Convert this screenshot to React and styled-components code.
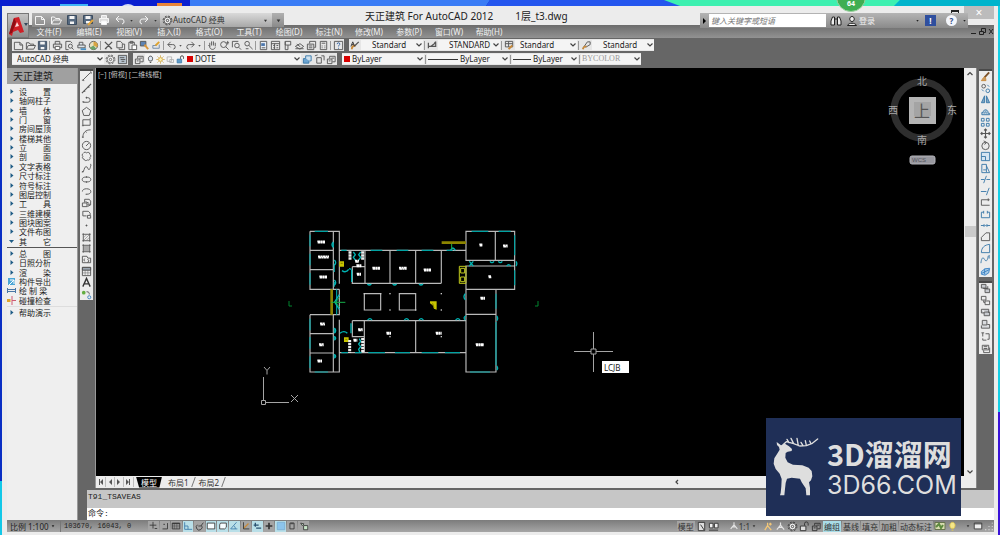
import React, { useState } from "react";
import styled, { createGlobalStyle } from "styled-components";

const BLUE = "#3a78a8";
const ORANGE = "#c98a3a";

// every glyph is drawn on a 12x12 grid
const glyphs = {
    file: <path d="M1.500 2.500h6l3 3v5h-9zM7.500 2.500v3h3" />,
    folder: <path d="M1.500 10V3h3l1 1.500h4V6M1.500 10l2-4h8l-2 4z" />,
    save: (
        <>
            <path d="M1.500 1.500h9v9h-9z" fill="#56697f" stroke="#3c4d60" />
            <path d="M3.500 2h5v3h-5zM4 7.500h4V10H4z" fill="#f4f4f4" stroke="none" />
        </>
    ),
    saveas: (
        <>
            <path d="M1.500 1.500h9v8h-9z" fill="#56697f" stroke="#3c4d60" />
            <path d="M3.500 2h5v3h-5zM4 7h4v2.500H4z" fill="#f4f4f4" stroke="none" />
            <path d="M6 11l5-5" stroke="#e4a63a" strokeWidth="2" />
        </>
    ),
    print: (
        <>
            <path d="M3.500 4.500v-3h5v3M1.500 4.500h9v4h-9z" fill="#dcdcdc" />
            <path d="M3.500 7h5v3.500h-5z" fill="#fff" />
        </>
    ),
    preview: <path d="M2 1.500h5l2 2M2 1.500v9h3M7 4.500a2.200 2.200 0 100 4.400 2.200 2.200 0 000-4.400M8.500 8.500l2 2" />,
    publish: (
        <>
            <path d="M2 5.500h8v3H2zM3.500 5.500v-3h4v3" fill="#dde4ea" />
            <path d="M5 10h6" stroke="#4a90c4" strokeWidth="2" />
        </>
    ),
    globe: (
        <>
            <circle cx="6" cy="6" r="4.500" fill="#e9e2c0" />
            <path d="M6 1.500v4.500l4 2A4.500 4.500 0 006 1.500" fill="#d9a441" stroke="none" />
            <path d="M6 6L2 8.500A4.500 4.500 0 009 9.500z" fill="#6ca36a" stroke="none" />
        </>
    ),
    cut: <path d="M2 2l7 7M10 2L3 9M2 9.500h2M8 9.500h2" strokeWidth="1.400" />,
    copy: <path d="M2 1.500h4l2 2v5H2zM4.500 9v1.500h6v-6H8.500" />,
    paste: (
        <>
            <path d="M2 2.500h6v8H2zM3.500 1.500h3v2h-3z" />
            <path d="M5.500 5.500h5v5h-5z" fill="#fff" />
        </>
    ),
    match: (
        <>
            <path d="M1.500 1.500h6v5h-6z" fill="#5c83b5" />
            <path d="M6 5l4 5" stroke="#d9953a" strokeWidth="2" />
        </>
    ),
    blockEdit: (
        <>
            <path d="M2 9h7V5M2 9V6h4" stroke="#6f8aa6" />
            <path d="M5 6l4-4" stroke="#dfa32d" strokeWidth="2" />
        </>
    ),
    undo: <path d="M5 2L2 5l3 3M2 5h5a2.500 2.500 0 011 5" />,
    redo: <path d="M7 2l3 3-3 3M10 5H5a2.500 2.500 0 00-1 5" />,
    down: <path d="M4 5h4l-2 3z" fill="currentColor" stroke="none" />,
    pan: <path d="M3 7L1.500 5.500M3 8V3M5 6V1.500M7 6V1.500M9 7V3M3 8c1 3 5 3 6 0" />,
    zoomRt: (
        <>
            <circle cx="5" cy="5" r="3.200" />
            <path d="M7.500 7.500l3 3M9.500 1v4M8 3h3" />
        </>
    ),
    zoomWin: (
        <>
            <path d="M1.500 8V1.500H8" />
            <circle cx="6.500" cy="6" r="2.500" />
            <path d="M8.500 8l2.500 2.500" />
        </>
    ),
    zoomPrev: (
        <>
            <circle cx="4.500" cy="4" r="2.500" />
            <path d="M6.500 6l4 4M3 9.500h3" />
        </>
    ),
    props: (
        <>
            <path d="M2.500 1.500h7v9h-7z" fill="#e8eef5" />
            <path d="M3.500 3.500h4v3h-4z" fill="#4b76ad" stroke="none" />
            <path d="M4 8.500h4" />
        </>
    ),
    center: <path d="M1.500 1.500h9v9h-9zM1.500 4h9M3.500 6h2M7 6h2M3.500 8.500h2M7 8.500h2M5 4v6" />,
    tool: <path d="M3.500 1.500h6v4h-6zM3.500 1.500v9h3v-5" />,
    sheet: <path d="M1.500 7l5-3 4 3-4 3zM1.500 9.500h9M3 4.500l4 3" />,
    markup: <path d="M1.500 4.500h7v6h-7zM4 4V1.500h6.500V8H9M3 6.500h4M3 8.500h4" />,
    calc: <path d="M2.500 1.500h7v9h-7zM4 3.500h4M4 6.500h1M7 6.500h1M4 8.500h1M7 8.500h1" />,
    help: (
        <>
            <path d="M1.500 1.500h9v9h-9z" />
            <path d="M4.500 4.500c0-2 3-2 3 0 0 1-1.500 1-1.500 2.500M6 8.500v1" stroke="#2b5ca0" />
        </>
    ),
    gear: (
        <>
            <circle cx="6" cy="6" r="4.800" strokeDasharray="2 1.800" strokeWidth="1" />
            <circle cx="6" cy="6" r="3.700" fill="#f2f2f2" strokeWidth=".8" />
            <circle cx="6" cy="6" r="1.300" strokeWidth=".9" />
        </>
    ),
    workspace: (
        <>
            <path d="M1.500 1.500h9v9h-9z" fill="#b8c4cf" />
            <path d="M3 4h5M4 6h5M5 8h3" />
        </>
    ),
    brush: (
        <>
            <path d="M2 10c0-3 2-4 4-4" stroke={ORANGE} strokeWidth="2" />
            <path d="M5 6.500L9.500 2" strokeWidth="1.400" />
            <path d="M1 7l2-5 2 5M2 5h2" stroke="#333" />
        </>
    ),
    dimBrush: <path d="M1.500 3v6M1.500 7h8V3L4 7M8 3l2-1" strokeWidth="1.300" />,
    tableBrush: (
        <>
            <path d="M1.500 1.500h8v6h-8zM1.500 4h8M5 1.500v6" />
            <path d="M5 10l4-4" stroke={ORANGE} strokeWidth="2" />
        </>
    ),
    leaderBrush: (
        <>
            <path d="M2 9l5-7h3v3L5 8" />
            <path d="M2 10c1-3 2-3 4-3" stroke={ORANGE} strokeWidth="2" />
        </>
    ),
    layers: <path d="M1.500 5.500h5v5h-5zM4 5V2.500h6v6H7M3 7.500h2M6 4.500h3" />,
    layerBlue: (
        <>
            <path d="M1.500 5h6v5h-6z" fill="#6ba4d1" stroke={BLUE} />
            <path d="M4 4.500V2h6v5.500H8" fill="#cfe2f0" stroke={BLUE} />
        </>
    ),
    layerPrev: <path d="M3 4h5v6H3zM1 2l3-1M8 2h3v5" />,
    bulb: <path d="M4.500 8C2 5 3.500 1.500 6 1.500S10 5 7.500 8zM5 10h2" fill="#dfe9f5" />,
    sun: (
        <>
            <circle cx="6" cy="6" r="2.600" stroke="#c99a2c" fill="#fff2b0" />
            <path d="M6 .5v2M6 9.500v2M.5 6h2M9.500 6h2M2 2l1.500 1.500M8.500 8.500L10 10M10 2L8.500 3.500M2 10l1.500-1.500" stroke="#c99a2c" />
        </>
    ),
    vp: <path d="M1.500 2.500h6v6h-6zM5 6h5v4H5z" stroke="#aaa" />,
    unlock: (
        <>
            <path d="M1.500 5.500h6v5h-6z" fill="#5f9cc9" stroke={BLUE} />
            <path d="M6 5V3a2 2 0 014 0v2" />
        </>
    ),
    lockOpen: (
        <>
            <path d="M1.500 5.500h6v5h-6z" fill="#ddd" />
            <path d="M6 5V3a2 2 0 014 0v2" />
        </>
    ),
    line: <path d="M2 10l8-8M1 10h2v1M10 1h1v2" />,
    xline: <path d="M1 11L11 1M3 8l1.500 1.500M7.500 3.500L9 5" strokeWidth="1.200" />,
    pline: <path d="M2 9h5.500a2.500 2.500 0 000-5H5M1.500 8.500h2M6 3v2" />,
    polygon: <path d="M6 1.500L10.700 5 9 10.300H3L1.300 5z" />,
    rect: <path d="M2 3h8v6H2zM1 9.500h2M9.500 2h1.500" />,
    arc: <path d="M2 10.500C2 5 5 2 10.500 2M1 10h2M5 4l1 1" />,
    circle: (
        <>
            <circle cx="6" cy="6" r="4.500" />
            <path d="M6 6l2.500-2.500M5.500 6h1" />
        </>
    ),
    cloud: <path d="M2.500 2.500C3.500 1 5 1 6 2c1.500-1 4-.5 3.500 1.500 1.500 1 1.500 2.500.3 3.500.7 2-1 3.500-2.800 2.800C5.500 11 3.500 10.500 3.500 9 1.500 8.500 1 7 2 6 1 5 1.200 3.300 2.500 2.500z" />,
    spline: <path d="M1 10c3 0 2-6 4.500-6S7 8 9 7c1.500-.7 1-3 2-5M1 9.500h2M10 1.500h1" />,
    ellipse: (
        <>
            <ellipse cx="6" cy="6" rx="4.700" ry="2.700" />
            <path d="M5.500 3.300h1M5.500 8.700h1" strokeWidth="1.600" />
        </>
    ),
    ellArc: <path d="M1.500 6c0-2 2-3 4.500-3s4.700 1 4.700 3S9 9 6 9M5 9h1.500" />,
    insert: <path d="M4 2.500h5l1.500 2v4H7M1.500 6.500h5v4h-5zM5 5l4 2M4 2.500V6M7 10.500l3.500-2" />,
    block: <path d="M2 2.500h6l2 2v2M2 2.500v5h4M7 7h3.500v3H7z" />,
    point: <path d="M5.500 5.500h1v1h-1z" fill="currentColor" />,
    hatch: (
        <>
            <path d="M3 6l3-3M3 9l6-6M6 9l3-3" strokeWidth=".5" />
            <path d="M1.500 2.500h9M1.500 9.500h9M2.500 1.500v9M9.500 1.500v9" />
        </>
    ),
    gradient: (
        <>
            <path d="M3 3h6v6H3z" fill="#aaa" stroke="none" />
            <path d="M1.500 2.500h9M1.500 9.500h9M2.500 1.500v9M9.500 1.500v9" />
        </>
    ),
    region: <path d="M1.500 2.500h5l1 2h3v5h-9zM7 6a1.500 1.500 0 110 3M4 5a2 2 0 000 3" />,
    table: (
        <>
            <path d="M1.500 4.500h9M1.500 7.500h9M4.500 4.500v6M7.500 4.500v6" strokeWidth=".5" />
            <path d="M1.500 1.500h9v3h-9z" fill="#9aa5b0" />
            <path d="M1.500 1.500h9v9h-9z" />
        </>
    ),
    mtext: <path d="M2 10.500L6 1.500l4 9M3.500 7.500h5" stroke="#333" strokeWidth="1.500" />,
    addSel: (
        <>
            <circle cx="3" cy="4" r="2" fill="#62ad3f" stroke="none" />
            <path d="M6 3c3 0 3 1 3 3" />
            <circle cx="9" cy="9" r="1.700" stroke="#3d83c4" />
        </>
    ),
    erase: (
        <>
            <path d="M5 7l5-5.500" stroke="#7a5028" strokeWidth="2" />
            <path d="M1.500 10.500h5L6 7H4z" fill="#c99a62" stroke={ORANGE} />
        </>
    ),
    copyObj: (
        <>
            <circle cx="4" cy="3.500" r="2" />
            <circle cx="8.500" cy="8.500" r="2" stroke={BLUE} />
            <path d="M2 7l2 2M8 2l2 2" stroke={BLUE} />
        </>
    ),
    mirror: <path d="M5 2L1.500 9.500H5zM7 2l3.500 7.500H7z" fill="#7fa6c4" stroke={BLUE} />,
    offset: <path d="M2 9.500h8.500V8H9C9 3 3.500 3 3.500 7H2zM5 8c0-2 2-2 2 0" fill="#b4cbdc" stroke={BLUE} />,
    array: <path d="M1.500 1.500h3v3h-3zM7 1.500h3v3H7zM1.500 7h3v3h-3zM7 7h3v3H7z" stroke={BLUE} />,
    move: <path d="M6 1v10M1 6h10M4.500 2.500L6 1l1.500 1.500M4.500 9.500L6 11l1.500-1.500M2.500 4.500L1 6l1.500 1.500M9.500 4.500L11 6 9.500 7.500" strokeWidth="1.200" />,
    rotate: (
        <>
            <circle cx="6" cy="6.500" r="4" />
            <path d="M4 1l3 1.500L5 5" />
        </>
    ),
    scale: <path d="M1.500 1.500h9v9h-9zM1.500 6H6v4.500" fill="#d5e5f2" stroke={BLUE} />,
    stretch: <path d="M2 1.500h5v9H2zM7 3l3.500 7.500H7M3.500 7.500h3" stroke={BLUE} />,
    trim: <path d="M1 6h4M7 6h4M4 10l3-8" stroke={BLUE} />,
    extend: <path d="M1 6h6M7 10l3-8" stroke={BLUE} />,
    breakPt: <path d="M10.500 3h-9v6h9M9 1.500v3" />,
    breakObj: <path d="M4 3.500H1.500v6h9v-6H8M4 2v3M8 2v3" stroke={BLUE} />,
    join: <path d="M1 6h4M7 6h4M4 4.500L5.500 6 4 7.500M8 4.500L6.500 6 8 7.500" stroke={BLUE} />,
    chamfer: <path d="M1.500 10.500V7l5-5h4v8.500z" />,
    fillet: <path d="M1.500 10.500C1.500 5 5 2 10.500 1.500v9z" stroke={BLUE} />,
    blend: <path d="M1 10c1-8 3-6 4-4s3 3 4-4M10 1v4" stroke={BLUE} />,
    explode: <path d="M1.500 6l4-3 5-.5-1 5-4 2.500-4-1zM5 3v6M2 8l8-4" fill="#a8cbe6" stroke="#3d83c4" />,
    front: <path d="M1.500 1.500h5v4h-5zM3.500 6h5V3.500M5.500 6v4.500h5v-4H6" fill="#c6c9ce" />,
    back: <path d="M1.500 1.500h5v4h-5zM5.500 6.500h5v4h-5zM4 6v2h1.500" />,
    above: <path d="M1.500 2.500h8v4M1.500 2.500v4h3M4.500 5.500h6v4h-6z" fill="#c6c9ce" />,
    under: <path d="M2.500 1.500h5v5h-5zM1.500 7v3h9V6H8" fill="#d9dbde" />,
    textFront: <path d="M1.500 2h3M3 2v4M6 3h4v6H8M3 8v2h4" />,
    hatchBack: <path d="M2.500 2.500h7v5h-7zM4 8v2.500h6.500V5M4 4h4M4 6h4" />,
    snap: <path d="M6 1v8M2 5h8M8 9h3" />,
    ell: <path d="M3 9.500h6v-7M4 4h2" />,
    grid: (
        <>
            <path d="M1.500 5h9M1.500 7h9M4 2.500v7M7 2.500v7" strokeWidth=".5" />
            <path d="M1.500 2.500h9v7h-9zM1.500 3h9" />
        </>
    ),
    ortho: <path d="M2 1.500v8.500h9M2 6h4v4" stroke={BLUE} />,
    polar: <path d="M3 4.500a3.500 3.500 0 105 1M4 6h3l3-4" />,
    osnap: <path d="M1.500 2.500h9v7h-9z" fill="#f7fdff" />,
    osnap3d: <path d="M3 2.500h7v5l-2 2H2v-5z" fill="#f7fdff" />,
    angle: <path d="M9 1.500L2 9.500h8M6 6c1.500 1 1.500 2 1.500 3.500" stroke={BLUE} />,
    ducs: (
        <>
            <path d="M3 9l6-6" stroke={ORANGE} strokeWidth="1.500" />
            <path d="M3 1.500v8h7" />
        </>
    ),
    dyn: <path d="M4 2v5M2 5h6M5 8.500h6" stroke="#27506f" strokeWidth="1.500" />,
    plus: <path d="M6 2v8M2 6h8" strokeWidth="2" />,
    tpy: <path d="M1.500 1.500h9v9h-9z" fill="#8cc4ec" stroke="#7aaed2" />,
    qp: <path d="M3.500 2.500h5v7h-5zM5 2v2M7 2v2" />,
    sel: <path d="M2 2.500l4 1-2 2zM5.500 5.500h5v5h-5z" fill="#c9e6c9" />,
    page: <path d="M2.500 1.500h7v9h-7zM5 4l4 6" fill="#ddd" />,
    panes: <path d="M1.500 2.500h4v5h-4zM7 2.500h4V7.500H7zM1 10h10" fill="#eee" />,
    man: <path d="M6 1.500v3l-4 5M6 4.500l4 5M4 7h4" stroke="#e4e4e4" strokeWidth="1.300" />,
    manGold: <path d="M5 2v3l-3 5M5 5l4 5M8 2v3M6.500 3.500h3" stroke="#f3c777" strokeWidth="1.400" />,
    photo: (
        <>
            <path d="M1 2.500h10v7H1z" fill="#d8ddb0" stroke="#67754e" />
            <path d="M2 7l3-3 2 4 2-3" stroke="#5d8a3e" strokeWidth="2" />
        </>
    ),
    bulbGold: <path d="M4.500 8C2 5 3.500 1.500 6 1.500S10 5 7.500 8zM5 10h2" fill="#f5e68a" stroke="#e0c84e" />,
    screen: <path d="M1.500 2.500h9v7h-9zM1.500 3.500h9" fill="#eee" />,
    grip: <path d="M10 2v1M10 6v1M10 10v1M6 6v1M6 10v1M2 10v1" stroke="#ddd" strokeWidth="1.500" />,
    binoc: <path d="M1 10V6l1.500-4h2v8zM11 10V6L9.500 2h-2v8zM5 4h2" fill="#eee" />,
    user: <path d="M6 1.500c-3 0-3 5 0 5s3-5 0-5M1.500 10.500c1-3 8-3 9 0z" fill="#eee" />,
};

function Icon({ name, size = 11 }) {
    return (
        <svg
            width={size}
            height={size}
            viewBox="0 0 12 12"
            fill="none"
            stroke="currentColor"
            strokeWidth="1"
            aria-hidden="true"
        >
            {glyphs[name]}
        </svg>
    );
}

const Chevron = ({ up, left }) => (
    <svg width="8" height="8" viewBox="0 0 8 8" fill="none" stroke="#444" strokeWidth="1.200">
        <path d={left ? "M5 2L3 4l2 2" : up ? "M1.500 5L4 2.500 6.500 5" : "M1.500 2.500L4 5l2.500-2.500"} />
    </svg>
);

function Tools({ items }) {
    return items.map((name, i) =>
        name === "|" ? (
            <Divider key={i} />
        ) : (
            <ToolButton key={i} $narrow={name === "down"} type="button" aria-label={name}>
                <Icon name={name} size={name === "down" ? 7 : 11} />
            </ToolButton>
        )
    );
}

function Combo({ label, value, width, indent = 0, lead, disabled }) {
    return (
        <ComboBox $width={width} $indent={indent} $disabled={disabled}>
            {lead}
            <Select aria-label={label} disabled={disabled} defaultValue={value}>
                <option>{value}</option>
            </Select>
            <Chevron />
        </ComboBox>
    );
}

const quickIcons = ["file", "folder", "save", "saveas", "print", "undo"];

const menus = ["文件(F)", "编辑(E)", "视图(V)", "插入(I)", "格式(O)", "工具(T)", "绘图(D)", "标注(N)", "修改(M)", "参数(P)", "窗口(W)", "帮助(H)"];

const standardTools = [
    "file", "folder", "save", "|", "print", "preview", "publish", "globe", "|",
    "cut", "copy", "paste", "match", "blockEdit", "|", "undo", "down", "redo", "down", "|",
    "pan", "zoomRt", "zoomWin", "zoomPrev", "|", "props", "center", "tool", "sheet", "markup", "calc", "|", "help",
];

const drawTools = [
    "line", "xline", "pline", "polygon", "rect", "arc", "circle", "cloud", "spline", "ellipse",
    "ellArc", "insert", "block", "point", "hatch", "gradient", "region", "table", "mtext", "addSel",
];

const modifyTools = [
    "erase", "copyObj", "mirror", "offset", "array", "move", "rotate", "scale", "stretch",
    "trim", "extend", "breakPt", "breakObj", "join", "chamfer", "fillet", "blend", "explode",
];

const orderTools = ["front", "back", "above", "under", "textFront", "hatchBack"];

const paletteMain = [
    "设　　置", "轴网柱子", "墙　　体", "门　　窗", "房间屋顶", "楼梯其他", "立　　面", "剖　　面", "文字表格",
    "尺寸标注", "符号标注", "图层控制", "工　　具", "三维建模", "图块图案", "文件布图", "其　　它",
];

const paletteMore = [
    { text: "总　　图" },
    { text: "日照分析" },
    { text: "渲　　染" },
    { text: "构件导出", icon: "export" },
    { text: "绘 制 梁", icon: "beam" },
    { text: "碰撞检查", icon: "clash" },
];

const toggles = [
    ["snap", 0], ["ell", 0], ["grid", 0], ["ortho", 1], ["polar", 0], ["osnap", 1], ["osnap3d", 1],
    ["angle", 1], ["ducs", 0], ["dyn", 1], ["plus", 0], ["tpy", 1], ["qp", 0], ["sel", 0],
];

function Marker({ kind, open }) {
    return (
        <svg width="9" height="9" viewBox="0 0 9 9" aria-hidden="true">
            {!kind && <path d={open ? "M2 3h5L4.500 6z" : "M3.500 2l3 2.500-3 2.500z"} fill="#1f5c86" />}
            {kind === "export" && (
                <>
                    <path d="M1 1h7v7H1z" fill="#4aa6d6" />
                    <path d="M3 3h4v4M7 3L2 8" stroke="#fff" fill="none" />
                </>
            )}
            {kind === "beam" && <path d="M.5 2v5M8.500 2v5M1 3.500h7M1 5.500h7" stroke="#4a78a5" fill="none" />}
            {kind === "clash" && (
                <>
                    <path d="M0 4.500h3.500" stroke="#e0a52a" strokeWidth="3" />
                    <path d="M5 0v9M5 4.500h4" stroke="#d05a72" strokeWidth="1" />
                </>
            )}
        </svg>
    );
}

// the plan group is drawn three units to the pixel
const walls = [
    "M30 28H118V185M30 28V202H118M100 28V202M30 85H100M30 143H100",
    "M30 278H118V220M118 202V220M118 262V278M30 278V450H118V293M100 278V450M30 335H100M30 393H100",
    "M118 85H498M195 85V184M270 85V184M347 85V184M424 85V184M155 184H424M157 134H195M157 134V184",
    "M193 215H242V264H193zM298 215H347V264H298z",
    "M157 296H498M193 296V392M347 296V392M118 392H498M157 296V344H193",
    "M498 115V28H644V115zM586 28V115M498 132H644V202H498zM644 115V132",
    "M498 184V450H588V202M498 277H588",
];

const windows = [
    "M30 38v35M30 95v35M30 153v35M30 290v35M30 345v35M30 403v35M44 28h40M44 450h40",
    "M124 85h16M212 85h35M290 85h35M365 85h35M440 85h18M205 392h50M285 392h45M365 392h50M435 392h45M124 392h20M165 392h20",
    "M515 28h50M596 28h36M644 40v60M644 145v45M588 215v45M588 300v130M510 450h60",
    "M100 62v14M103 125v25M103 180v14M103 318v14M103 343v10M103 397v10M110 202v76",
];

const swings = [
    "M202 186q6 6 12 0M278 186q6 6 12 0M357 186q6 6 12 0M203 294q7-8 13 0M313 294q7-8 13 0M357 294q7-8 13 0M467 294q7-8 13 0",
    "M100 60q-8 8 0 16M103 130q8-8 0-16M103 190q8-8 0-16M103 318q8 8 0 16M103 343q8 6 0 12M103 397q8 6 0 12",
    "M118 218l-14 22 14 22M508 118l12 14M508 132l12-14M570 118q6 8 12 0M595 118q6 8 12 0M620 132q6-8 12 0M648 118q5 7 0 14",
    "M496 215q-8 10 0 18M498 282q-10 4-2 12M590 282q6 8 0 14M590 432q6 8 0 12M452 85q6-14 14 0M120 334q12-10 22 0M126 146q12 8 20-4M147 140l8 2M155 144v36M153 304v30",
    "M160 90l6 8-6 8 6 8M182 90l-6 8 6 8-6 8M178 350l4 8-6 8 6 8-6 8 4 10",
];

const labels = [
    [52, 58, 23], [54, 103, 33], [58, 163, 23], [60, 304, 15], [57, 366, 14], [52, 415, 14],
    [217, 137, 23], [297, 137, 23], [371, 142, 22], [538, 67, 10], [609, 70, 14], [565, 162, 9],
    [541, 227, 14], [259, 332, 14], [407, 332, 18], [527, 366, 25], [170, 155, 13], [174, 321, 14],
    [160, 353, 12], [165, 116, 12], [169, 129, 16],
];

function FloorPlan() {
    return (
        <g transform="translate(300 222) scale(0.3333)" fill="none">
            <path d={walls.join("")} stroke="#b9b9b9" strokeWidth="3.500" />
            <path d={windows.join("")} stroke="#00a3a3" strokeWidth="3.500" />
            <path d={swings.join("")} stroke="#00b4b4" strokeWidth="4" />
            <path d="M91 202h8v76h-8zM425 58h73v8h-73z" fill="#8c8400" />
            <path d="M478 133h20v51h-20zM482 139h12v14h-12zM482 165h12v14h-12z" stroke="#c3cc1c" strokeWidth="3" />
            <path d="M390 238h20v25l-8-3-4-10-8-6zM118 118h14v16h-14zM132 346h14v14h-14z" fill="#c9c500" />
            <path d="M398 244l4 14M122 124h6M136 352h6" stroke="#5c5b00" strokeWidth="2" />
            <path d="M94 241h42M106 241l12-14M106 241l12 14M455 66v15" stroke="#17b04a" strokeWidth="3" />
            <path d="M150 88v26M188 88v26M149 354v38M188 348v44" stroke="#eee" strokeWidth="9" strokeDasharray="7 2" />
            {labels.map(([x, y, w]) => (
                <path key={`${x}-${y}`} d={`M${x} ${y}h${w}M${x + 1} ${y + 4}h${w - 1}`} stroke="#fff" strokeWidth="5" strokeDasharray="8 1 5 1" />
            ))}
            {[[270, 215], [270, 264], [424, 215], [424, 264], [270, 344], [424, 344], [193, 215], [242, 215], [347, 264]].map(([x, y]) => (
                <rect key={`${x}-${y}`} x={x - 2} y={y - 2} width="4" height="4" fill="#ccc" />
            ))}
        </g>
    );
}

function Drawing() {
    return (
        <Scene viewBox="96 68 869 408" preserveAspectRatio="xMinYMin slice">
            <FloorPlan />
            <path d="M289 301v5h3M538 301v5h-3" fill="none" stroke="#00852f" />
            <path d="M263.500 377v23M266 402.500h23M261.500 400.500h4v4h-4zM264 367l3 3.500 3-3.500M267 370.500v4M291 395l7 7M298 395l-7 7" fill="none" stroke="#a5a5a5" />
            <path d="M593.500 332v17M593.500 354v18M574 351.500h17M596 351.500h17M591 349h5v5h-5z" fill="none" stroke="#a5a5a5" />
            <circle cx="922" cy="110" r="28" fill="none" stroke="#2e2e2e" strokeWidth="7" />
            <rect x="909" y="97" width="27" height="27" fill="#b4b4b4" />
            <rect x="914" y="102" width="17" height="14" fill="#a4a4a4" />
            <g fill="#a8a8a8" fontSize="10" fontFamily="'Noto Sans CJK SC', sans-serif" textAnchor="middle">
                <text x="922" y="85">北</text>
                <text x="893" y="114">西</text>
                <text x="952" y="114">东</text>
                <text x="922" y="144">南</text>
                <text x="922" y="117" fontSize="16" fill="#555">上</text>
            </g>
            <rect x="910" y="156" width="25" height="8" rx="2" fill="#98989f" stroke="#b4b4ba" />
            <text x="912" y="162" fontSize="6" fill="#54545c" fontFamily="'Liberation Sans', sans-serif">WCS</text>
        </Scene>
    );
}

function Deer() {
    return (
        <svg width="46" height="60" viewBox="36 78 138 180" fill="#dedede" aria-hidden="true">
            <path d="M47 93L60 103 72 98 84 106 93 114 92 120 80 122 74 126 73 140 80 154 96 161 124 163 143 170 152 180 154 196 150 208 144 214 147 230 147 253H136L134 232 122 214 117 203 92 200 78 203 74 216 72 234 70 253H57L59 246 61 226 62 204 56 188 44 174 38 158 40 142 50 126 56 116 54 108 48 102z" />
            <path d="M66 101L76 92 98 98 116 105 136 104 154 97 170 84M84 95l-6-10M98 98l-8-16M112 104l-4-22M126 104l-6-10M136 103l-3-14M150 98l-4-8" fill="none" stroke="#dedede" strokeWidth="4" strokeLinejoin="round" strokeLinecap="round" />
        </svg>
    );
}

export default function App() {
    const [command, setCommand] = useState("");
    const [keyword, setKeyword] = useState("");
    const [tab, setTab] = useState("模型");

    return (
        <Desktop>
            <GlobalStyle />
            <Wallpaper viewBox="0 0 1000 6" preserveAspectRatio="none">
                <path d="M0 0h190v6H0z" fill="#0a1fd0" />
                <path d="M190 0h300l-4 6H190z" fill="#3a7cf5" />
                <path d="M490 0h190v6H486z" fill="#2456ee" />
                <path d="M664 0h236l-6 6H680z" fill="#3df0b0" />
                <path d="M900 0h100v6H894z" fill="#00b4cc" />
                <path d="M60 4h28v2H60z" fill="#3fb4f5" />
                <path d="M157 3h25v3h-25z" fill="#e8843a" />
                <path d="M122 6q6-4 12 0z" fill="#d5dcf5" />
            </Wallpaper>
            <Badge>64</Badge>

            <Window>
                <Header>
                    <AppButton type="button" aria-label="应用程序菜单">
                        <svg width="21" height="25" viewBox="0 0 21 25">
                            <path d="M1 20L6 4l5-1 5 15-4 1-2-3-5 2-1 4z" fill="#cf1f26" />
                            <path d="M1 20L6 4l2 4-4 11z" fill="#8f0d14" />
                            <path d="M7 13l2-5 2 4z" fill="#fbdcdc" />
                            <path d="M16 9h4l-2 3z" fill="#33475c" />
                        </svg>
                    </AppButton>
                    <HeaderRows>
                        <TitleRow>
                            <QuickBar>
                                {quickIcons.map((name) => (
                                    <QuickButton key={name} type="button" aria-label={name}>
                                        <Icon name={name} size={12} />
                                    </QuickButton>
                                ))}
                                <Icon name="down" size={7} />
                                <QuickButton type="button" aria-label="redo">
                                    <Icon name="redo" size={12} />
                                </QuickButton>
                                <Icon name="down" size={7} />
                                <WorkspacePick>
                                    <Icon name="gear" />
                                    <QuickSelect aria-label="工作空间" defaultValue="AutoCAD 经典">
                                        <option>AutoCAD 经典</option>
                                    </QuickSelect>
                                    <Icon name="down" size={9} />
                                </WorkspacePick>
                                <Icon name="down" size={11} />
                            </QuickBar>
                            <Title>
                                <span>天正建筑 For AutoCAD 2012</span>
                                <span>1层_t3.dwg</span>
                            </Title>
                            <InfoBar>
                                <svg width="8" height="8" viewBox="0 0 8 8"><path d="M3 1l3 3-3 3z" /></svg>
                                <Search
                                    aria-label="搜索"
                                    placeholder="键入关键字或短语"
                                    value={keyword}
                                    onChange={(e) => setKeyword(e.target.value)}
                                />
                                <Icon name="binoc" size={12} />
                                <Icon name="user" size={12} />
                                <Login type="button">登录</Login>
                                <Icon name="down" size={7} />
                                <Exchange>!</Exchange>
                                <HelpButton type="button">?</HelpButton>
                                <Icon name="down" size={7} />
                            </InfoBar>
                            <RestoreButton type="button" aria-label="还原" />
                            <CloseButton type="button">×</CloseButton>
                        </TitleRow>
                        <MenuBar>
                            {menus.map((m) => (
                                <MenuButton key={m} type="button">{m}</MenuButton>
                            ))}
                            <DocControls width="24" height="9" viewBox="0 0 24 9" fill="none" stroke="#222">
                                <path d="M1 6.500h5M9.500 4.500h4v3h-4zM11.500 4V1.500h4v4H14M19 2l4 5M23 2l-4 5" />
                            </DocControls>
                        </MenuBar>
                    </HeaderRows>
                </Header>

                <ToolRows>
                    <ToolRow>
                        <Strip>
                            <Tools items={standardTools} />
                        </Strip>
                        <Strip>
                            <ToolButton type="button" aria-label="文字样式"><Icon name="brush" /></ToolButton>
                            <Combo label="文字样式" value="Standard" width={62} indent={10} />
                            <Divider />
                            <ToolButton type="button" aria-label="标注样式"><Icon name="dimBrush" /></ToolButton>
                            <Combo label="标注样式" value="STANDARD" width={62} indent={10} />
                            <Divider />
                            <ToolButton type="button" aria-label="表格样式"><Icon name="tableBrush" /></ToolButton>
                            <Combo label="表格样式" value="Standard" width={62} indent={4} />
                            <Divider />
                            <ToolButton type="button" aria-label="引线样式"><Icon name="leaderBrush" /></ToolButton>
                            <Combo label="引线样式" value="Standard" width={62} indent={10} />
                        </Strip>
                    </ToolRow>
                    <ToolRow>
                        <Strip>
                            <Combo label="工作空间" value="AutoCAD 经典" width={92} indent={4} />
                            <Tools items={["gear", "workspace"]} />
                        </Strip>
                        <Strip>
                            <Tools items={["layers"]} />
                            <Combo
                                label="图层"
                                value="DOTE"
                                width={156}
                                lead={
                                    <>
                                        <Icon name="bulb" size={9} />
                                        <Icon name="sun" size={9} />
                                        <Icon name="vp" size={9} />
                                        <Icon name="unlock" size={9} />
                                        <Swatch />
                                    </>
                                }
                            />
                            <Tools items={["layerBlue", "layerPrev", "layers"]} />
                        </Strip>
                        <Strip>
                            <Combo label="颜色" value="ByLayer" width={82} lead={<Swatch />} />
                            <Divider />
                            <Combo label="线型" value="ByLayer" width={82} lead={<Rule $long />} />
                            <Divider />
                            <Combo label="线宽" value="ByLayer" width={66} lead={<Rule />} />
                            <Divider />
                            <Combo label="打印样式" value="BYCOLOR" width={60} disabled />
                        </Strip>
                    </ToolRow>
                </ToolRows>

                <Main>
                    <Palette>
                        <PaletteTitle>天正建筑</PaletteTitle>
                        <PaletteList $rows={17}>
                            {paletteMain.map((text, i) => (
                                <PaletteItem key={text} type="button">
                                    <Marker open={i === paletteMain.length - 1} />
                                    {text}
                                </PaletteItem>
                            ))}
                        </PaletteList>
                        <PaletteList $rows={6} $ruled>
                            {paletteMore.map(({ text, icon }) => (
                                <PaletteItem key={text} type="button">
                                    <Marker kind={icon} />
                                    {text}
                                </PaletteItem>
                            ))}
                        </PaletteList>
                        <PaletteList $rows={1} $last>
                            <PaletteItem type="button">
                                <Marker />
                                帮助演示
                            </PaletteItem>
                        </PaletteList>
                    </Palette>

                    <Work>
                        <Stage>
                            <SideColumn>
                                <SideTools $rows={20}>
                                    <Tools items={drawTools} />
                                </SideTools>
                            </SideColumn>
                            <View>
                                <Viewport>
                                    <Drawing />
                                    <ViewLabel>[−] [俯视] [二维线框]</ViewLabel>
                                    <DynamicInput aria-label="动态输入" defaultValue="LCJB" />
                                </Viewport>
                                <LayoutBar>
                                    <svg width="38" height="10" viewBox="0 0 38 10" fill="#555">
                                        <path d="M3 2h1v6H3zM7 2v6L4 5zM16 2v6l-3-3zM21 2v6l3-3zM30 2v6l3-3zM33 2h1v6h-1z" />
                                        <path d="M9.500 0v10M18.500 0v10M27.500 0v10M37.500 0v10" stroke="#bbb" />
                                    </svg>
                                    {["模型", "布局1", "布局2"].map((name) => (
                                        <LayoutTab key={name} type="button" $active={name === tab} onClick={() => setTab(name)}>
                                            {name}
                                        </LayoutTab>
                                    ))}
                                    <HScroll><Chevron left /></HScroll>
                                </LayoutBar>
                            </View>
                            <VScroll>
                                <Chevron up />
                                <Thumb />
                                <Chevron />
                            </VScroll>
                            <SideColumn>
                                <SideTools $rows={18}>
                                    <Tools items={modifyTools} />
                                </SideTools>
                                <SideTools $rows={6}>
                                    <Tools items={orderTools} />
                                </SideTools>
                            </SideColumn>
                        </Stage>
                        <CommandArea>
                            <History>T91_TSAVEAS</History>
                            <Prompt>
                                命令:
                                <CommandInput
                                    aria-label="命令"
                                    value={command}
                                    onChange={(e) => setCommand(e.target.value)}
                                />
                            </Prompt>
                        </CommandArea>
                    </Work>
                </Main>

                <StatusBar>
                    <ScaleText>比例 1:100 <Icon name="down" size={8} /></ScaleText>
                    <Coords>103670, 16043, 0</Coords>
                    <ToggleGroup>
                        {toggles.map(([name, on]) => (
                            <Toggle key={name} type="button" aria-label={name} $on={on}>
                                <Icon name={name} size={10} />
                            </Toggle>
                        ))}
                    </ToggleGroup>
                    <StatusRight>
                        <StatusButton type="button">模型</StatusButton>
                        <Icon name="page" />
                        <Icon name="panes" />
                        <Annotation>
                            <Icon name="man" size={10} />
                            1:1
                            <Icon name="down" size={8} />
                        </Annotation>
                        <Icon name="manGold" />
                        <Icon name="man" />
                        <Icon name="gear" />
                        <Icon name="lockOpen" />
                        <Icon name="layers" />
                        {["编组", "基线", "填充", "加粗", "动态标注"].map((t) => (
                            <StatusButton key={t} type="button" $on={t === "编组"}>{t}</StatusButton>
                        ))}
                        <Icon name="photo" size={12} />
                        <Icon name="bulbGold" />
                        <StatusGap />
                        <Icon name="down" size={8} />
                        <Icon name="screen" size={10} />
                        <Icon name="grip" size={10} />
                    </StatusRight>
                </StatusBar>
            </Window>

            <Watermark>
                <Deer />
                <WatermarkText>
                    <BrandName>3D溜溜网</BrandName>
                    <BrandSite>3D66.COM</BrandSite>
                </WatermarkText>
            </Watermark>
        </Desktop>
    );
}

const GlobalStyle = createGlobalStyle`
    * {
        box-sizing: border-box;
    }

    body {
        margin: 0;
        overflow: hidden;
        font-family: "Noto Sans", "Noto Sans CJK SC", sans-serif;
        font-size: 8px;
        color: #222;
    }

    button,
    input,
    select {
        font: inherit;
        color: inherit;
        border: none;
        padding: 0;
        margin: 0;
        outline: none;
        background: none;
    }

    svg {
        display: block;
        flex: none;
    }
`;

const Desktop = styled.div`
    position: relative;
    height: 100vh;
    display: flex;
    flex-direction: column;
    background:
        linear-gradient(#0a2fc4 90%, #12c8e8 90%) left / 50% 100% no-repeat,
        linear-gradient(#14cfe6 77%, #3a12d8 77%) right / 50% 100% no-repeat;
`;

const Wallpaper = styled.svg`
    width: 100%;
    height: 6px;
`;

const Badge = styled.span`
    position: absolute;
    z-index: 3;
    top: -18px;
    right: 134px;
    width: 30px;
    height: 30px;
    padding-top: 16px;
    border: 1px solid #9ccf9f;
    border-radius: 50%;
    background: #3fae52;
    color: #fff;
    font-size: 7px;
    font-weight: bold;
    line-height: 10px;
    text-align: center;
`;

const Window = styled.div`
    flex: 1;
    min-height: 0;
    display: flex;
    flex-direction: column;
    margin: 0 2px;
    padding: 0 4px 3px 5px;
    background: #ececec;
`;

const Header = styled.header`
    display: flex;
    align-items: flex-end;
    background: linear-gradient(#ececec 19px, #6c6c6c 19px, #929292);
`;

const AppButton = styled.button`
    width: 22px;
    height: 25px;
    background: linear-gradient(#c4c4c4, #8c8c8c);
    border: 1px solid #777;
    overflow: hidden;
`;

const HeaderRows = styled.div`
    flex: 1;
`;

const TitleRow = styled.div`
    position: relative;
    display: flex;
    align-items: flex-start;
    height: 19px;
    padding: 7px 26px 0 3px;
`;

const QuickBar = styled.div`
    position: relative;
    display: flex;
    align-items: center;
    gap: 1px;
    height: 14px;
    width: 252px;
    background: linear-gradient(#b0b0b0, #8a8a8a);
    color: #333;
`;

const QuickButton = styled.button`
    width: 15px;
    display: flex;
    justify-content: center;
    color: #f4f4f4;
`;

const WorkspacePick = styled.label`
    flex: 1;
    display: flex;
    align-items: center;
    height: 14px;
    padding: 0 2px;
    background: linear-gradient(#dadada, #a8a8a8);
`;

const QuickSelect = styled.select`
    flex: 1;
    appearance: none;
    height: 12px;
    font-size: 8px;
    line-height: 12px;
`;

const Title = styled.h1`
    flex: 1;
    display: flex;
    gap: 22px;
    margin: -5px 0 0;
    padding-left: 81px;
    font-size: 10px;
    font-weight: normal;
    line-height: 16px;
    white-space: nowrap;
`;

const InfoBar = styled.div`
    position: relative;
    z-index: 1;
    display: flex;
    align-items: center;
    gap: 4px;
    height: 15px;
    width: 268px;
    background: linear-gradient(#b4b4b4, #8a8a8a);
`;

const Search = styled.input`
    width: 117px;
    height: 13px;
    margin-left: -3px;
    padding-left: 2px;
    background: #fff;
    font-size: 8px;
    font-style: italic;

    &::placeholder {
        color: #777;
    }
`;

const Login = styled.button`
    flex: 1;
    margin-left: -3px;
    text-align: left;
    color: #f2f2f2;
`;

const Exchange = styled.span`
    width: 11px;
    height: 11px;
    margin-right: 6px;
    background: #2f4f9e;
    color: #fff;
    font-weight: bold;
    line-height: 11px;
    text-align: center;
`;

const HelpButton = styled.button`
    width: 11px;
    height: 11px;
    border-radius: 50%;
    background: #f4f6fb;
    color: #2d4a86;
    font-weight: bold;
    line-height: 11px;
`;

const RestoreButton = styled.button`
    position: absolute;
    top: 4px;
    right: 35px;
    width: 8px;
    height: 6px;
    border: 1px solid #222;
    border-top-width: 2px;
`;

const CloseButton = styled.button`
    position: absolute;
    top: 0;
    right: 0;
    width: 30px;
    height: 13px;
    background: #bcbcbc;
    color: #fff;
    font-size: 12px;
    line-height: 13px;
`;

const MenuBar = styled.nav`
    display: flex;
    align-items: center;
    height: 13px;
`;

const MenuButton = styled.button`
    width: 40px;
    color: #f0f0f0;
    font-size: 8px;
    line-height: 12px;
    white-space: nowrap;
`;

const DocControls = styled.svg`
    margin-left: auto;
`;

const ToolRows = styled.div`
    display: flex;
    flex-direction: column;
    gap: 2px;
    height: 30px;
    padding: 1px 0 0 5px;
    background: #666;
`;

const ToolRow = styled.div`
    display: flex;
    gap: 5px;
`;

const Strip = styled.div`
    display: flex;
    align-items: center;
    height: 12px;
    background: #e6e6e6;
    color: #555;
`;

const Divider = styled.span`
    flex: none;
    width: 1px;
    height: 9px;
    margin: 0 1px;
    background: #999;
`;

const ToolButton = styled.button`
    display: flex;
    align-items: center;
    justify-content: center;
    width: ${(p) => (p.$narrow ? 7 : 12)}px;
    height: 11px;
    color: #555;
`;

const ComboBox = styled.label`
    display: flex;
    align-items: center;
    gap: 1px;
    width: ${(p) => p.$width}px;
    height: 10px;
    padding-left: ${(p) => p.$indent + 1}px;
    background: #f4f4f4;
    color: ${(p) => (p.$disabled ? "#999" : "#222")};
    font-family: ${(p) => (p.$disabled ? '"Liberation Serif", serif' : "inherit")};
`;

const Select = styled.select`
    flex: 1;
    min-width: 0;
    appearance: none;
    height: 10px;
    font-size: 8px;
    line-height: 10px;

    &:disabled {
        opacity: 1;
    }
`;

const Swatch = styled.span`
    width: 6px;
    height: 6px;
    margin: 0 1px;
    background: #d80000;
`;

const Rule = styled.span`
    width: ${(p) => (p.$long ? 30 : 18)}px;
    height: 1px;
    margin-right: 1px;
    background: #333;
`;

const Main = styled.div`
    flex: 1;
    min-height: 0;
    display: flex;
`;

const Palette = styled.aside`
    width: 71px;
    background: #efefef;
    border-right: 1px solid #999;
`;

const PaletteTitle = styled.h2`
    height: 16px;
    margin: 0;
    padding-left: 6px;
    background: #a0a0a0;
    font-size: 10px;
    font-weight: normal;
    line-height: 16px;
`;

const PaletteList = styled.div`
    display: grid;
    grid-template-rows: repeat(${(p) => p.$rows}, 1fr);
    height: ${(p) => (p.$rows === 17 ? 163 : p.$rows === 6 ? 59 : 14)}px;
    padding: ${(p) => (p.$rows === 17 ? "2px 0 1px" : "1px 0")};
    border-top: 1px solid ${(p) => (p.$ruled ? "#555" : p.$last ? "#ddd" : "transparent")};
`;

const PaletteItem = styled.button`
    display: flex;
    align-items: center;
    gap: 3px;
    min-height: 0;
    height: 9px;
    font-size: 8px;
    line-height: 9px;
    white-space: pre;
`;

const Work = styled.div`
    flex: 1;
    min-width: 0;
    display: flex;
    flex-direction: column;
    background: #666;
`;

const Stage = styled.div`
    flex: 1;
    min-height: 0;
    display: flex;
`;

const SideColumn = styled.div`
    width: 17px;
    padding: 3px 2px 0;
`;

const SideTools = styled.div`
    display: grid;
    grid-template-rows: repeat(${(p) => p.$rows}, 1fr);
    justify-items: center;
    align-items: center;
    height: ${(p) => (p.$rows === 20 ? 229 : p.$rows === 18 ? 206 : 71)}px;
    margin-bottom: 6px;
    background: #ececec;
    box-shadow: 0 -2px 0 #4a4a4a;
`;

const View = styled.div`
    flex: 1;
    min-width: 0;
    display: flex;
    flex-direction: column;
    border-left: 1px solid #999;
`;

const Viewport = styled.div`
    position: relative;
    flex: 1;
    min-height: 0;
    background: #000;
`;

const Scene = styled.svg`
    width: 100%;
    height: 100%;
`;

const ViewLabel = styled.span`
    position: absolute;
    top: 2px;
    left: 2px;
    color: #c4c4c4;
    font-size: 7px;
    line-height: 9px;
`;

const DynamicInput = styled.input`
    position: absolute;
    top: 293px;
    left: 506px;
    width: 27px;
    height: 12px;
    padding-left: 2px;
    background: #fff;
    font-size: 8px;
`;

const LayoutBar = styled.div`
    display: flex;
    align-items: center;
    height: 12px;
    background: #ececec;
`;

const LayoutTab = styled.button`
    position: relative;
    height: 11px;
    padding: 0 ${(p) => (p.$active ? 5 : 4)}px;
    margin-left: 2px;
    background: ${(p) => (p.$active ? "#000" : "transparent")};
    color: ${(p) => (p.$active ? "#fff" : "#333")};
    font-size: 8px;
    line-height: 11px;
    clip-path: ${(p) => (p.$active ? "polygon(0 0, 100% 0, 90% 100%, 12% 100%)" : "none")};

    &::after {
        content: "";
        position: absolute;
        top: 0;
        right: -1px;
        width: 1px;
        height: 10px;
        background: #777;
        transform: skewX(-20deg);
    }
`;

const HScroll = styled.div`
    width: 291px;
    margin-left: auto;
`;

const VScroll = styled.div`
    display: flex;
    flex-direction: column;
    justify-content: space-between;
    align-items: center;
    width: 13px;
    padding: 2px 0 12px;
    background: #ececec;
    border-right: 1px solid #888;
`;

const Thumb = styled.div`
    width: 11px;
    height: 11px;
    margin-bottom: 84px;
    background: #cacaca;
`;

const CommandArea = styled.section`
    height: 30px;
    margin: 2px 0 0 9px;
    font-family: "Liberation Mono", "Noto Sans CJK SC", monospace;
    color: #222;
`;

const History = styled.div`
    height: 18px;
    padding-left: 1px;
    background: #c6c6c6;
    line-height: 13px;
`;

const Prompt = styled.label`
    display: flex;
    align-items: center;
    gap: 3px;
    height: 12px;
    padding-left: 1px;
    background: #fff;
    line-height: 12px;
`;

const CommandInput = styled.input`
    flex: 1;
    height: 11px;
`;

const StatusBar = styled.footer`
    display: flex;
    align-items: center;
    height: 12px;
    background: linear-gradient(#7c7c7c, #a6a6a6);
`;

const ScaleText = styled.span`
    display: flex;
    align-items: center;
    width: 54px;
    padding-left: 3px;
    border-right: 1px solid #777;
    white-space: nowrap;
`;

const Coords = styled.span`
    width: 83px;
    padding-left: 3px;
    font-family: "Liberation Mono", monospace;
    font-size: 7px;
    white-space: nowrap;
`;

const ToggleGroup = styled.div`
    display: grid;
    grid-template-columns: repeat(14, 1fr);
    column-gap: 1px;
    width: 161px;
    margin-left: 4px;
`;

const Toggle = styled.button`
    display: flex;
    align-items: center;
    justify-content: center;
    height: 11px;
    background: ${(p) => (p.$on ? "#b9dfe8" : "#a4a4a4")};
    color: #333;
`;

const StatusRight = styled.div`
    display: flex;
    align-items: center;
    gap: 1px;
    margin-left: auto;
    color: #333;
`;

const StatusButton = styled.button`
    height: 11px;
    padding: 0 1px;
    background: ${(p) => (p.$on ? "#a9dce6" : "#a4a4a4")};
    font-size: 8px;
    line-height: 11px;
    white-space: nowrap;
`;

const Annotation = styled.span`
    display: flex;
    align-items: center;
    margin: 0 4px 0 9px;
`;

const StatusGap = styled.span`
    width: 4px;
`;

const Watermark = styled.div`
    position: absolute;
    z-index: 2;
    right: 39px;
    bottom: 19px;
    display: flex;
    align-items: center;
    gap: 8px;
    width: 195px;
    height: 98px;
    padding-left: 7px;
    background: #1f2f57;
    color: #dedede;
`;

const WatermarkText = styled.div`
    white-space: nowrap;
`;

const BrandName = styled.div`
    font-family: "Noto Sans CJK SC", sans-serif;
    font-size: 29px;
    font-weight: bold;
    line-height: 36px;
`;

const BrandSite = styled.div`
    font-family: Inter, sans-serif;
    font-size: 25px;
    line-height: 28px;
`;
